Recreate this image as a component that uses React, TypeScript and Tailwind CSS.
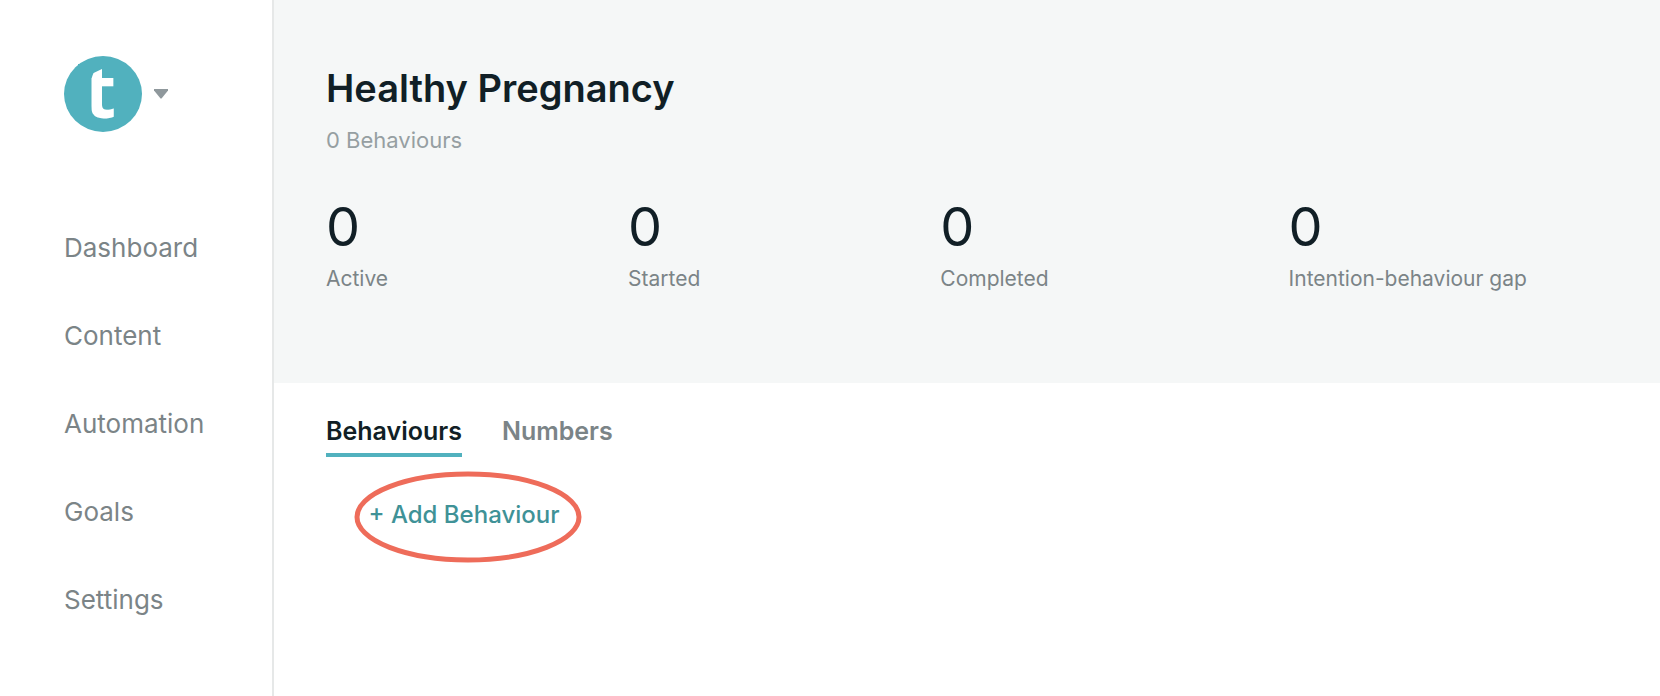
// Sidebar links
const NAV_ITEMS = ["Dashboard", "Content", "Automation", "Goals", "Settings"]

// Header numbers
const STATS = [
  { label: "Active", value: 0 },
  { label: "Started", value: 0 },
  { label: "Completed", value: 0 },
  { label: "Intention-behaviour gap", value: 0 },
]

const Logo = () => (
  <svg
    width="78"
    height="76"
    viewBox="0 0 78 76"
    role="img"
    aria-label="Account"
    className="overflow-visible"
  >
    <ellipse cx="39" cy="38" rx="39" ry="38" fill="#51b1be" />
    <text
      x="36"
      y="62"
      textAnchor="middle"
      fill="#ffffff"
      className="font-['Open_Sans',sans-serif] text-[74px] font-bold"
    >
      t
    </text>
    {/* slants the top and trims the left arm of the crossbar */}
    <path d="M14 8h25v4.5L27.5 18v46H14z" fill="#51b1be" />
  </svg>
)

const AccountMenu = () => (
  <button type="button" aria-label="Switch account" className="flex items-center gap-3">
    <Logo />
    <svg width="14" height="10" viewBox="0 0 14 10" aria-hidden="true">
      <path d="M0 0h14v1.5L7.5 9.5h-1L0 1.5z" fill="#8f989c" />
    </svg>
  </button>
)

const Sidebar = () => (
  <aside className="w-[274px] shrink-0 border-r-2 border-[#e6e8e8] px-16 pt-14">
    <AccountMenu />
    <nav className="mt-25">
      <ul className="flex flex-col gap-14">
        {NAV_ITEMS.map((item) => (
          <li key={item}>
            <a href="#" className="block text-[26px] leading-8 text-[#7b8487]">
              {item}
            </a>
          </li>
        ))}
      </ul>
    </nav>
  </aside>
)

const Header = () => (
  <header className="bg-[#f5f7f7] px-13 pt-16 pb-22">
    <h1 className="text-[38px] leading-12 font-semibold text-[#111f26]">Healthy Pregnancy</h1>
    <p className="mt-3 text-[22px] leading-8 text-[#969fa2]">0 Behaviours</p>
    <dl className="mt-[43px] flex gap-60">
      {STATS.map((stat) => (
        <div key={stat.label} className="flex flex-col-reverse">
          <dt className="mt-2 text-[21px] leading-8 whitespace-nowrap text-[#7b8487]">
            {stat.label}
          </dt>
          <dd className="text-[54px] leading-14 text-[#111f26]">{stat.value}</dd>
        </div>
      ))}
    </dl>
  </header>
)

const Tabs = () => (
  <div role="tablist" className="flex gap-10 text-[25px] leading-8 font-semibold">
    <button
      type="button"
      role="tab"
      aria-selected="true"
      className="border-b-4 border-[#51b1be] pb-1.5 text-[#111f26]"
    >
      Behaviours
    </button>
    <button
      type="button"
      role="tab"
      aria-selected="false"
      className="border-b-4 border-transparent pb-1.5 text-[#7b8487]"
    >
      Numbers
    </button>
  </div>
)

const AddBehaviour = () => (
  <div className="relative mt-3.5 flex h-[92px] w-[228px] items-center justify-center pr-2 pb-1">
    <button type="button" className="text-[24px] leading-8 font-medium whitespace-nowrap text-[#3f9297]">
      + Add Behaviour
    </button>
    <svg
      className="pointer-events-none absolute inset-0"
      width="228"
      height="92"
      viewBox="0 0 228 92"
      aria-hidden="true"
    >
      <ellipse cx="114" cy="46" rx="111" ry="43" fill="none" stroke="#ee6c5a" strokeWidth="5" />
    </svg>
  </div>
)

export default function App() {
  return (
    <div className="flex min-h-screen bg-white font-['Inter',sans-serif]">
      <Sidebar />
      <main className="min-w-0 flex-1">
        <Header />
        <section className="px-13 pt-8">
          <Tabs />
          <div className="pl-7">
            <AddBehaviour />
          </div>
        </section>
      </main>
    </div>
  )
}
